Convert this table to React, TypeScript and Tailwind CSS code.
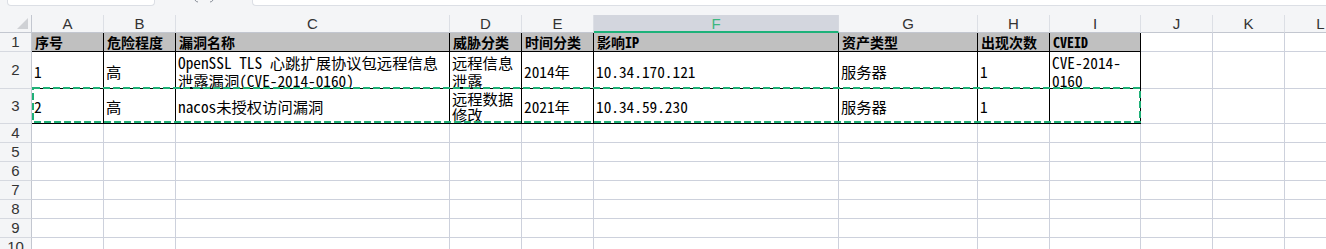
import React from 'react';

const COLS = ['A', 'B', 'C', 'D', 'E', 'F', 'G', 'H', 'I', 'J', 'K', 'L'];

// rows 1-3 hold the table, A..I
const DATA: string[][] = [
  ['序号', '危险程度', '漏洞名称', '威胁分类', '时间分类', '影响IP', '资产类型', '出现次数', 'CVEID'],
  ['1', '高', 'OpenSSL TLS 心跳扩展协议包远程信息\n泄露漏洞(CVE-2014-0160)', '远程信息\n泄露', '2014年', '10.34.170.121', '服务器', '1', 'CVE-2014-\n0160'],
  ['2', '高', 'nacos未授权访问漏洞', '远程数据\n修改', '2021年', '10.34.59.230', '服务器', '1', ''],
];

const ROW_CLS = [
  'flex items-center pl-[3px] bg-[#c0c0c0] border-r border-b border-black text-[14px] font-bold text-black whitespace-pre leading-[17px] overflow-hidden',
  'flex items-center pl-[2px] pt-[1px] border-r border-b border-black text-[15.3px] text-black whitespace-pre leading-[18px] overflow-hidden',
  'flex items-center pl-[2px] border-r border-b border-black text-[15.3px] text-black whitespace-pre leading-[16px]',
];

const cellFont = { fontFamily: '"Noto Sans Mono CJK SC", "Noto Sans CJK SC", monospace' };
const uiFont = { fontFamily: '"Liberation Sans", Arial, sans-serif' };

function ColHeader() {
  return (
    <>
      <div className="relative bg-[#f4f5f7] border-r border-b border-[#c3c7d0]">
        <svg className="absolute left-[17px] top-[3px]" width="11" height="11" viewBox="0 0 11 11">
          <polygon points="11,0 11,11 0,11" fill="#cfd1d5" />
        </svg>
      </div>
      {COLS.map((c) =>
        c === 'F' ? (
          <div
            key={c}
            className="flex items-center justify-center bg-[#d3d6de] border-r border-[#d6d9e0] border-b-2 border-b-[#1eb27a] text-[15px] text-[#3cb77f] pt-[3px]"
            style={uiFont}
          >
            {c}
          </div>
        ) : (
          <div
            key={c}
            className="flex items-center justify-center bg-[#f4f5f7] border-r border-[#dcdfe5] border-b border-b-[#c3c7d0] text-[15px] text-[#333] pt-[2px]"
            style={uiFont}
          >
            {c}
          </div>
        )
      )}
    </>
  );
}

function RowNum({ n }: { n: number }) {
  return (
    <div
      className="flex items-center justify-center bg-[#f4f5f7] border-r border-[#c3c7d0] border-b border-b-[#d6d9e0] text-[15px] text-[#333]"
      style={uiFont}
    >
      {n}
    </div>
  );
}

export default function App() {
  const emptyRows = [4, 5, 6, 7, 8, 9, 10];
  return (
    <div className="relative w-[1326px] h-[249px] overflow-hidden bg-[#f4f5f7]">
      {/* formula bar, only its bottom edge shows */}
      <div className="flex h-[15px] items-start">
        <div className="ml-[7px] w-[148px] h-[6px] bg-white border border-t-0 border-[#dcdfe5] rounded-b-[4px]" />
        <div className="w-[97px] flex justify-center">
          <svg width="20" height="4" viewBox="0 0 20 4">
            <path d="M1 0 Q2 2 4 2" stroke="#8a8f99" fill="none" />
            <path d="M16 2 Q18 2 19 0" stroke="#8a8f99" fill="none" />
          </svg>
        </div>
        <div className="flex-1 h-[6px] bg-white border border-t-0 border-r-0 border-[#dcdfe5] rounded-bl-[4px]" />
      </div>

      <div className="grid w-max grid-cols-[32px_72px_72px_274px_72px_72px_245px_139px_72px_91px_72px_72px_72px] grid-rows-[18px_19px_37px_35px_19px_19px_19px_19px_19px_19px_19px] bg-white">
        <ColHeader />

        {DATA.map((row, r) => (
          <React.Fragment key={r}>
            <RowNum n={r + 1} />
            {row.map((v, c) => (
              <div key={c} className={ROW_CLS[r]} style={cellFont}>
                {v}
              </div>
            ))}
            {['J', 'K', 'L'].map((c) => (
              <div key={c} className="border-r border-b border-[#cdd1dc]" />
            ))}
          </React.Fragment>
        ))}

        {emptyRows.map((n) => (
          <React.Fragment key={n}>
            <RowNum n={n} />
            {COLS.map((c) => (
              <div key={c} className="border-r border-b border-[#cdd1dc]" />
            ))}
          </React.Fragment>
        ))}
      </div>

      {/* copy marquee around row 3 */}
      <svg className="absolute left-[32px] top-[87px] pointer-events-none" width="1110" height="38" viewBox="0 0 1110 38">
        <rect x="1" y="1" width="1107" height="34" fill="none" stroke="#1fb077" strokeWidth="2" strokeDasharray="7 3" />
      </svg>
    </div>
  );
}
